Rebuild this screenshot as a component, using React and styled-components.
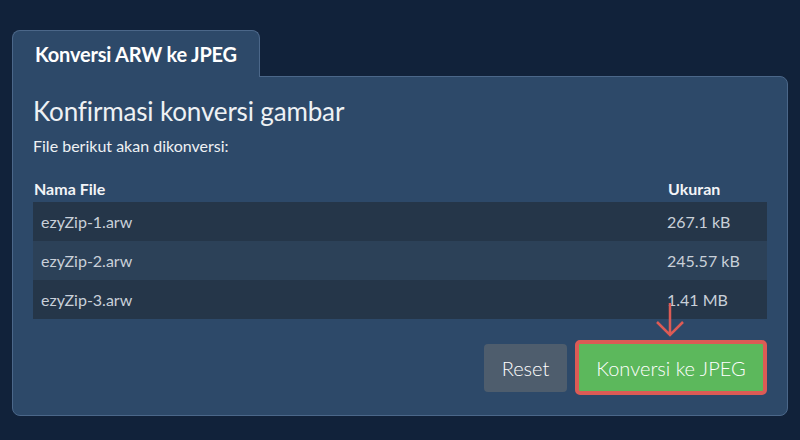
import React from "react";
import styled, { createGlobalStyle } from "styled-components";

const Global = createGlobalStyle`
  html, body { margin: 0; padding: 0; background: #11223a; }
  body { font-family: Lato, "Open Sans", sans-serif; color: #e9edf2; }
`;

const Page = styled.div`
  width: 800px;
  height: 440px;
  box-sizing: border-box;
  padding: 30px 12px 0 12px;
`;

const Card = styled.div`
  width: 776px;
  display: flex;
  flex-direction: column;
`;

const Tab = styled.div`
  position: relative;
  z-index: 1;
  align-self: flex-start;
  width: 248px;
  height: 47px;
  box-sizing: border-box;
  margin-bottom: -1px;
  padding: 11px 0 0 22px;
  background: #2d4969;
  border: 1px solid #4b6789;
  border-bottom: none;
  border-radius: 8px 8px 0 0;
  font-size: 20px;
  font-weight: 700;
  color: #ffffff;
  letter-spacing: -0.2px;
`;

const Panel = styled.div`
  background: #2d4969;
  border: 1px solid #4b6789;
  border-radius: 0 8px 8px 8px;
  padding: 18px 20px 19px 20px;
  height: 340px;
  box-sizing: border-box;
  display: flex;
  flex-direction: column;
`;

const Heading = styled.h2`
  margin: 0;
  font-size: 26px;
  font-weight: 400;
  color: #eef1f4;
  line-height: 32px;
  letter-spacing: -0.15px;
`;

const Note = styled.p`
  margin: 9px 0 0 0;
  font-size: 16px;
  line-height: 20px;
  color: #eef1f4;
`;

const Table = styled.div`
  margin-top: 21px;
  display: grid;
  grid-template-columns: 1fr 100px;
`;

const HeadCell = styled.div`
  font-size: 16px;
  font-weight: 700;
  color: #f2f4f7;
  height: 25px;
  line-height: 24px;
  padding-left: 1px;
`;

const Cell = styled.div`
  height: 39px;
  line-height: 39px;
  font-size: 16px;
  color: #c9d0d9;
  background: ${(p) => (p.$odd ? "#253649" : "#2c4158")};
  padding-left: ${(p) => (p.$first ? "8px" : "0")};
`;

const Actions = styled.div`
  margin-top: 21px;
  display: flex;
  justify-content: flex-end;
  align-items: center;
  gap: 8px;
`;

const Button = styled.button`
  font-family: Lato, "Open Sans", sans-serif;
  font-size: 20px;
  font-weight: 300;
  color: #ffffff;
  border: none;
  cursor: pointer;
  padding: 0;
`;

const ResetButton = styled(Button)`
  height: 48px;
  width: 83px;
  background: #4e5d6d;
  border-radius: 4px;
`;

const ConvertWrap = styled.div`
  position: relative;
`;

const ConvertButton = styled(Button)`
  display: block;
  height: 55px;
  width: 192px;
  box-sizing: border-box;
  background: #5cb85c;
  border: 4px solid #dc5b55;
  border-radius: 5px;
`;

const Arrow = styled.svg`
  position: absolute;
  left: 80px;
  top: -38px;
  width: 30px;
  height: 36px;
  overflow: visible;
`;

const files = [
  { name: "ezyZip-1.arw", size: "267.1 kB" },
  { name: "ezyZip-2.arw", size: "245.57 kB" },
  { name: "ezyZip-3.arw", size: "1.41 MB" },
];

export default function App() {
  return (
    <>
      <Global />
      <Page>
        <Card>
          <Tab>Konversi ARW ke JPEG</Tab>
          <Panel>
            <Heading>Konfirmasi konversi gambar</Heading>
            <Note>File berikut akan dikonversi:</Note>
            <Table>
              <HeadCell>Nama File</HeadCell>
              <HeadCell>Ukuran</HeadCell>
              {files.map((f, i) => (
                <React.Fragment key={f.name}>
                  <Cell $first $odd={i % 2 === 0}>{f.name}</Cell>
                  <Cell $odd={i % 2 === 0}>{f.size}</Cell>
                </React.Fragment>
              ))}
            </Table>
            <Actions>
              <ResetButton>Reset</ResetButton>
              <ConvertWrap>
                <Arrow viewBox="0 0 30 36">
                  <path
                    d="M15 1 V33 M2 20 L15 33 L28 20"
                    fill="none"
                    stroke="#dc5b55"
                    strokeWidth="2.5"
                  />
                </Arrow>
                <ConvertButton>Konversi ke JPEG</ConvertButton>
              </ConvertWrap>
            </Actions>
          </Panel>
        </Card>
      </Page>
    </>
  );
}
